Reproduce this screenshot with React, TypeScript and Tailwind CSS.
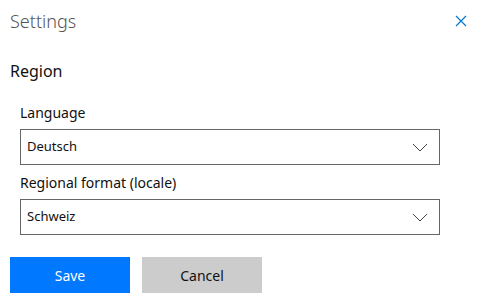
import React from "react";

function Chevron() {
  return (
    <svg width="16" height="9" viewBox="0 0 16 9" fill="none">
      <path d="M1 1 L8 8 L15 1" stroke="#444" strokeWidth="1" />
    </svg>
  );
}

function Select({ value }: { value: string }) {
  return (
    <div className="flex items-center justify-between h-[36px] w-[420px] border border-[#666] bg-white pl-[6px] pr-[11px]">
      <span className="text-[13px] text-[#111]">{value}</span>
      <Chevron />
    </div>
  );
}

export default function App() {
  return (
    <div
      className="w-[484px] h-[307px] bg-white relative"
      style={{ fontFamily: '"Noto Sans", "Open Sans", sans-serif' }}
    >
      <div className="flex items-center justify-between pl-[10px] pr-[17px] pt-[6px] h-[36px]">
        <span className="text-[18px] font-light text-[#555]">Settings</span>
        <svg width="12" height="12" viewBox="0 0 12 12">
          <path d="M1 1 L11 11 M11 1 L1 11" stroke="#0078d4" strokeWidth="1.2" />
        </svg>
      </div>
      <div className="pl-[10px] pt-[25px] text-[16px] text-[#111] leading-[20px]">Region</div>
      <div className="pl-[20px] pt-[22px] flex flex-col">
        <span className="text-[14px] text-[#111] leading-[20px] mb-[6px]">Language</span>
        <Select value="Deutsch" />
        <span className="text-[14px] text-[#111] leading-[20px] mt-[8px] mb-[6px]">Regional format (locale)</span>
        <Select value="Schweiz" />
      </div>
      <div className="flex gap-[12px] pl-[10px] pt-[22px]">
        <button className="w-[120px] h-[36px] bg-[#0078ff] text-white text-[14px]">Save</button>
        <button className="w-[120px] h-[36px] bg-[#cccccc] text-[#111] text-[14px]">Cancel</button>
      </div>
    </div>
  );
}
